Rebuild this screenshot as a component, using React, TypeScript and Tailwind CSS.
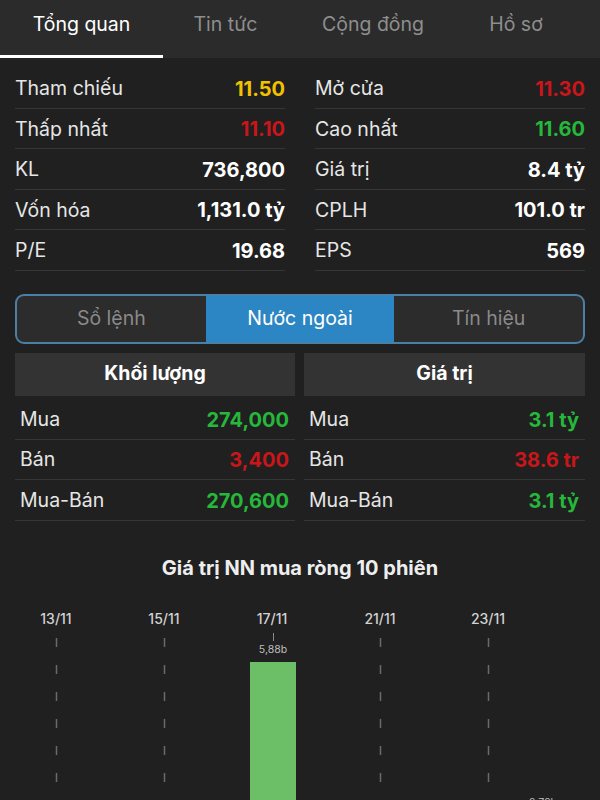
import React from "react";

const font = { fontFamily: "Inter, 'Noto Sans', sans-serif" };

type Cell = { label: string; value: string; color?: string };

const stats: [Cell, Cell][] = [
  [
    { label: "Tham chiếu", value: "11.50", color: "text-[#f2c200]" },
    { label: "Mở cửa", value: "11.30", color: "text-[#c8161b]" },
  ],
  [
    { label: "Thấp nhất", value: "11.10", color: "text-[#c8161b]" },
    { label: "Cao nhất", value: "11.60", color: "text-[#25b83a]" },
  ],
  [
    { label: "KL", value: "736,800" },
    { label: "Giá trị", value: "8.4 tỷ" },
  ],
  [
    { label: "Vốn hóa", value: "1,131.0 tỷ" },
    { label: "CPLH", value: "101.0 tr" },
  ],
  [
    { label: "P/E", value: "19.68" },
    { label: "EPS", value: "569" },
  ],
];

function StatRow({ c }: { c: Cell }) {
  return (
    <div className="flex h-[40.5px] items-center justify-between border-b border-[#363636] pt-[2px]">
      <span className="text-[19.5px] text-[#e6e6e6]">{c.label}</span>
      <span className={`text-[20px] font-bold ${c.color ?? "text-white"}`}>{c.value}</span>
    </div>
  );
}

function Table({ title, rows, pad }: { title: string; rows: Cell[]; pad: string }) {
  return (
    <div className="flex flex-col">
      <div className="flex h-[43px] items-center justify-center bg-[#333333]">
        <span className="text-[19.5px] font-bold text-white">{title}</span>
      </div>
      <div className="mt-[3px]">
        {rows.map((r, i) => (
          <div
            key={i}
            className={`flex ${i === 1 ? "h-[40px]" : "h-[41px]"} items-center justify-between border-b border-[#363636] pt-[2px] ${pad}`}
          >
            <span className="text-[19.5px] text-[#e6e6e6]">{r.label}</span>
            <span className={`text-[20px] font-bold ${r.color}`}>{r.value}</span>
          </div>
        ))}
      </div>
    </div>
  );
}

function Chart() {
  const xs = [56, 164, 272, 380, 488];
  const labels = ["13/11", "15/11", "17/11", "21/11", "23/11"];
  return (
    <svg width="600" height="240" className="block">
      {xs.map((x, i) => (
        <text
          key={labels[i]}
          x={x}
          y={28}
          textAnchor="middle"
          fontSize="14"
          fontWeight="500"
          fill="#d2d2d2"
          style={font}
        >
          {labels[i]}
        </text>
      ))}
      {xs.map((x, i) =>
        i === 2 ? null : (
          <line
            key={x}
            x1={x + 0.5}
            x2={x + 0.5}
            y1={42}
            y2={240}
            stroke="#6a6a6a"
            strokeWidth="1.5"
            strokeDasharray="9 18"
          />
        )
      )}
      <line x1={273.5} x2={273.5} y1={37} y2={45} stroke="#8a8a8a" strokeWidth="1" />
      <text x={273} y={57} textAnchor="middle" fontSize="10.5" fill="#bdbdbd" style={font}>
        5,88b
      </text>
      <rect x={250} y={66} width={46} height={174} fill="#6cbf66" />
      <text x={543} y={210} textAnchor="middle" fontSize="10.5" fill="#bdbdbd" style={font}>
        2.72b
      </text>
    </svg>
  );
}

export default function App() {
  const tabs = [
    { t: "Tổng quan", w: "w-[163px]", active: true },
    { t: "Tin tức", w: "w-[125px]" },
    { t: "Cộng đồng", w: "w-[170px]" },
    { t: "Hồ sơ", w: "w-[116px]" },
  ];
  return (
    <div className="h-[800px] w-[600px] overflow-hidden bg-[#202020]" style={font}>
      <div className="flex h-[58px] bg-[#2b2b2b]">
        {tabs.map((tb) => (
          <div key={tb.t} className={`relative flex ${tb.w} justify-center pt-[10px]`}>
            <span
              className={`text-[19.5px] leading-[28px] ${tb.active ? "text-white" : "text-[#8e8e8e]"}`}
            >
              {tb.t}
            </span>
            {tb.active && <div className="absolute bottom-0 left-0 h-[3px] w-full bg-white" />}
          </div>
        ))}
      </div>

      <div className="grid grid-cols-2 gap-x-[30px] px-[15px] pt-[10px]">
        <div>
          {stats.map((r, i) => (
            <StatRow key={i} c={r[0]} />
          ))}
        </div>
        <div>
          {stats.map((r, i) => (
            <StatRow key={i} c={r[1]} />
          ))}
        </div>
      </div>

      <div className="mx-[15px] mt-[23px] flex h-[50px] overflow-hidden rounded-[9px] border-2 border-[#4a7fa6] bg-[#2c2c2c]">
        <div className="flex flex-1 items-center justify-center text-[19.5px] text-[#8a8a8a]">Sổ lệnh</div>
        <div className="flex flex-1 items-center justify-center bg-[#2d86c4] text-[19.5px] text-white">
          Nước ngoài
        </div>
        <div className="flex flex-1 items-center justify-center text-[19.5px] text-[#8a8a8a]">Tín hiệu</div>
      </div>

      <div className="mx-[15px] mt-[9px] grid grid-cols-[280px_281px] gap-x-[9px]">
        <Table
          title="Khối lượng"
          pad="pl-[5px] pr-[6px]"
          rows={[
            { label: "Mua", value: "274,000", color: "text-[#25b83a]" },
            { label: "Bán", value: "3,400", color: "text-[#c8161b]" },
            { label: "Mua-Bán", value: "270,600", color: "text-[#25b83a]" },
          ]}
        />
        <Table
          title="Giá trị"
          pad="pl-[5px] pr-[6px]"
          rows={[
            { label: "Mua", value: "3.1 tỷ", color: "text-[#25b83a]" },
            { label: "Bán", value: "38.6 tr", color: "text-[#c8161b]" },
            { label: "Mua-Bán", value: "3.1 tỷ", color: "text-[#25b83a]" },
          ]}
        />
      </div>

      <div className="mt-[34px] text-center text-[20px] font-bold leading-[26px] text-[#eeeeee]">
        Giá trị NN mua ròng 10 phiên
      </div>

      <div className="mt-[15px]">
        <Chart />
      </div>
    </div>
  );
}
